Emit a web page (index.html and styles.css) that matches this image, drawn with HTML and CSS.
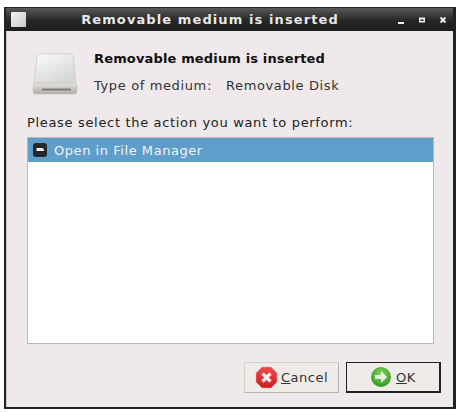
FILE: index.html
```html
<!DOCTYPE html>
<html lang="en">
<head>
    <meta charset="UTF-8">
    <meta name="viewport" content="width=device-width, initial-scale=1.0">
    <title>Removable medium is inserted</title>
    <link rel="stylesheet" href="styles.css">
</head>
<body>
    <div class="window">
        <div class="titlebar">
            <div class="title-icon"></div>
            <div class="title-text">Removable medium is inserted</div>
            <div class="title-buttons">
                <svg width="10" height="10" viewBox="0 0 10 10"><rect x="2" y="7" width="6" height="2" fill="#eee"/></svg>
                <svg width="10" height="10" viewBox="0 0 10 10"><path d="M2 2.500h6v5H2z M3.500 4.500v1.500h3V4.500z" fill="#eee" fill-rule="evenodd"/></svg>
                <svg width="10" height="10" viewBox="0 0 10 10"><path d="M2.500 2.500l5 5M7.500 2.500l-5 5" stroke="#eee" stroke-width="2" fill="none"/></svg>
            </div>
        </div>
        <div class="content">
            <div class="header">
                <svg class="drive-icon" width="46" height="42" viewBox="0 0 46 46" preserveAspectRatio="none">
                    <defs>
                        <linearGradient id="driveTop" x1="0" y1="0" x2="0.6" y2="1">
                            <stop offset="0" stop-color="#fbfbfb"/>
                            <stop offset="1" stop-color="#d6d6d4"/>
                        </linearGradient>
                        <linearGradient id="driveFront" x1="0" y1="0" x2="0" y2="1">
                            <stop offset="0" stop-color="#e4e3df"/>
                            <stop offset="1" stop-color="#aeaca6"/>
                        </linearGradient>
                    </defs>
                    <path d="M5 3.500Q5 1 8 1h30q3 0 3 2.500L44 33H2z" fill="url(#driveTop)" stroke="#d0cfcc"/>
                    <rect x="1" y="33" width="44" height="12" rx="3" fill="url(#driveFront)" stroke="#c4c2bd" stroke-width="0.600"/>
                    <rect x="10" y="39" width="29" height="2" fill="#77766f"/>
                </svg>
                <div class="info">
                    <div class="heading">Removable medium is inserted</div>
                    <div class="medium"><span>Type of medium:</span><span>Removable Disk</span></div>
                </div>
            </div>
            <div class="prompt">Please select the action you want to perform:</div>
            <div class="list">
                <div class="list-row">
                    <svg width="14" height="14" viewBox="0 0 14 14"><rect width="14" height="14" rx="3" fill="#26282b"/><path d="M3.500 5h6l1.500 1.500v1.500H3.500z" fill="#f0f0f0"/></svg>
                    <span>Open in File Manager</span>
                </div>
            </div>
            <div class="actions">
                <button class="btn">
                    <svg width="23" height="23" viewBox="0 0 23 23">
                        <defs>
                            <linearGradient id="cancelFill" x1="0" y1="0" x2="0" y2="1">
                                <stop offset="0" stop-color="#ee4a4a"/>
                                <stop offset="1" stop-color="#cf1b20"/>
                            </linearGradient>
                        </defs>
                        <path d="M7 1h9l6 6v9l-6 6H7l-6-6V7z" fill="url(#cancelFill)" stroke="#d9a8a8" stroke-width="0.500"/>
                        <path d="M7.500 7.500l8 8M15.500 7.500l-8 8" stroke="#f6f2f2" stroke-width="3.200"/>
                    </svg>
                    <span><u>C</u>ancel</span>
                </button>
                <button class="btn btn-default">
                    <svg width="22" height="22" viewBox="0 0 22 22">
                        <defs>
                            <radialGradient id="okFill" cx="0.5" cy="0.35" r="0.65">
                                <stop offset="0" stop-color="#8ad45e"/>
                                <stop offset="1" stop-color="#2f9a1e"/>
                            </radialGradient>
                        </defs>
                        <circle cx="11" cy="11" r="10" fill="url(#okFill)"/>
                        <path d="M5 9h6V5l6 6-6 6v-4H5z" fill="#e8f0e4"/>
                    </svg>
                    <span><u>O</u>K</span>
                </button>
            </div>
        </div>
    </div>
</body>
</html>
```
FILE: styles.css
```css
body {
    margin: 0;
    padding: 7px 3px 6px 4px;
    height: 412px;
    box-sizing: border-box;
    background-color: #ffffff;
    font-family: "DejaVu Sans", sans-serif;
    overflow: hidden;
}
.window {
    height: 399px;
    display: flex;
    flex-direction: column;
    border: 2px solid #222222;
    border-top: 1px solid #222222;
    border-right-width: 3px;
    background-color: #efe9eb;
}
.titlebar {
    height: 23px;
    flex: none;
    display: flex;
    align-items: center;
    padding: 0 3px 0 5px;
    background: linear-gradient(#585858, #262626 55%, #1c1c1c);
    color: #e8e8e8;
}
.title-icon {
    width: 15px;
    height: 15px;
    background: linear-gradient(135deg, #f4f4f4, #c8c8c6);
    border-radius: 1px;
}
.title-text {
    flex: 1;
    text-align: center;
    font-size: 13px;
    font-weight: bold;
    letter-spacing: 1.1px;
    padding: 0 0 1px 10px;
    margin-right: 12px;
}
.title-buttons {
    display: flex;
    gap: 11px;
    padding-right: 2px;
}
.content {
    flex: 1;
    display: flex;
    flex-direction: column;
    border-left: 1px solid #cfcac8;
    padding: 0 19px 14px 20px;
    min-height: 0;
}
.header {
    display: flex;
    gap: 16px;
    padding: 20px 0 0 5px;
}
.drive-icon {
    margin-top: 2px;
}
.heading {
    font-size: 13px;
    font-weight: bold;
    color: #111111;
    letter-spacing: 0.15px;
    line-height: 16px;
    padding-bottom: 11px;
}
.medium {
    display: flex;
    gap: 14px;
    font-size: 13px;
    line-height: 16px;
    color: #333333;
    letter-spacing: 0.63px;
}
.prompt {
    margin-top: 20px;
    font-size: 13px;
    line-height: 16px;
    color: #222222;
    letter-spacing: 0.67px;
}
.list {
    margin-top: 6px;
    flex: 1;
    background-color: #ffffff;
    border: 1px solid #bdb9b2;
}
.list-row {
    height: 24px;
    display: flex;
    align-items: center;
    gap: 7px;
    padding-left: 5px;
    background-color: #5f9dca;
    color: #eef4f8;
    font-size: 13px;
    letter-spacing: 0.55px;
}
.actions {
    display: flex;
    justify-content: flex-end;
    gap: 7px;
    margin: 18px -7px 0 0;
}
.btn {
    width: 95px;
    height: 31px;
    display: flex;
    align-items: center;
    justify-content: center;
    gap: 3px;
    padding: 0;
    background-color: #efebe9;
    border: 1px solid #d4d0cc;
    border-right-color: #b8b4ae;
    border-bottom-color: #b8b4ae;
    font-family: inherit;
    font-size: 13px;
    letter-spacing: 0.5px;
    color: #333333;
}
.btn-default {
    border: 1px solid #222222;
    border-right-width: 2px;
    border-bottom-width: 2px;
    gap: 4px;
}
```
